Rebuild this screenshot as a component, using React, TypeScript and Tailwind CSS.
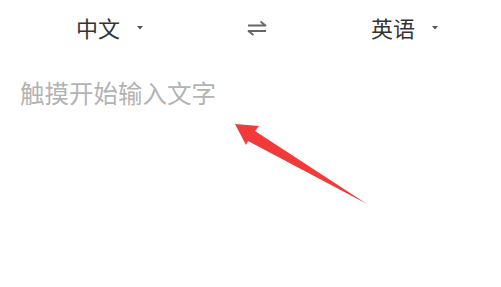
import React from 'react';

const Caret: React.FC = () => (
  <svg width="6" height="4" viewBox="0 0 6 4" className="ml-[17px] mt-[1px]">
    <path d="M0 0 L6 0 L3 3.5 Z" fill="#555" />
  </svg>
);

const SwapIcon: React.FC = () => (
  <svg width="20" height="16" viewBox="0 0 20 16">
    <path d="M1 5.5 H18.5 L13.5 1.5" fill="none" stroke="#666" strokeWidth="1.8" strokeLinejoin="round" />
    <path d="M19 11 H1.5 L6.5 15" fill="none" stroke="#666" strokeWidth="1.8" strokeLinejoin="round" />
  </svg>
);

export default function App() {
  return (
    <div
      className="relative w-[501px] h-[287px] bg-white overflow-hidden"
      style={{ fontFamily: '"Noto Sans CJK SC", "Noto Sans", sans-serif' }}
    >
      <div className="h-[55px] flex items-center justify-between pl-[76px] pr-[63px]">
        <div className="flex items-center text-[22px] text-[#333]">
          <span>中文</span>
          <Caret />
        </div>
        <SwapIcon />
        <div className="flex items-center text-[22px] text-[#333]">
          <span>英语</span>
          <Caret />
        </div>
      </div>
      <div className="pl-[20px] pt-[22px] text-[24.5px] leading-[32px] text-[#b3b3b3]">
        触摸开始输入文字
      </div>
      <svg className="absolute left-0 top-0" width="501" height="287" viewBox="0 0 501 287">
        <polygon
          points="235,124 259,126 255,131 367,204 248,141 246,145"
          fill="#f23a3a"
        />
      </svg>
    </div>
  );
}
